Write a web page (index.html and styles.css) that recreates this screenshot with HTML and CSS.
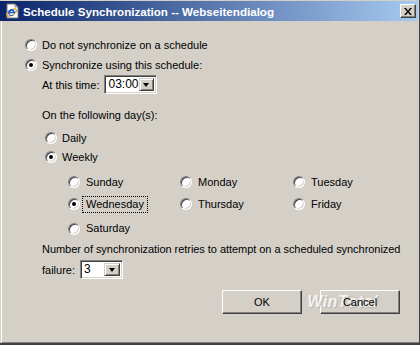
FILE: index.html
```html
<!DOCTYPE html>
<html lang="de">
<head>
  <meta charset="UTF-8" />
  <title>Schedule Synchronization -- Webseitendialog</title>
  <link rel="stylesheet" href="styles.css">
</head>
<body>
  <div class="window">
    <div class="titlebar">
      <svg class="app-icon" width="16" height="16" viewBox="0 0 16 16">
        <path d="M3 1h8l3 3v11H3z" fill="#fff" stroke="#7a7a7a" stroke-width="1"/>
        <path d="M11 1v3h3" fill="none" stroke="#7a7a7a" stroke-width="1"/>
        <ellipse cx="7.5" cy="9.5" rx="5.5" ry="2.5" fill="none" stroke="#e0a020" stroke-width="1.2" transform="rotate(-30 7.5 9.5)"/>
        <path d="M11 9.5a3.5 3.5 0 1 0-1 2.5h-1.6a2 2 0 1 1 .9-2.9H5.6v1.2H11z" fill="#1a5fd0"/>
      </svg>
      <span class="title">Schedule Synchronization -- Webseitendialog</span>
      <span class="close-btn">
        <svg width="8" height="7" viewBox="0 0 8 7"><path d="M0 0h2l2 2.5L6 0h2L5 3.5 8 7H6L4 4.5 2 7H0l3-3.5z" fill="#000"/></svg>
      </span>
    </div>

    <div class="dialog">
      <div class="row">
        <span class="radio"></span>
        <span class="label">Do not synchronize on a schedule</span>
      </div>
      <div class="row">
        <span class="radio checked"></span>
        <span class="label">Synchronize using this schedule:</span>
      </div>

      <div class="section">
        <div class="row time-row">
          <span class="label">At this time:</span>
          <span class="select time-select">
            <span class="select-value">03:00</span>
            <span class="select-btn"><span class="arrow"></span></span>
          </span>
        </div>

        <div class="row days-title">
          <span class="label">On the following day(s):</span>
        </div>

        <div class="freq">
          <div class="row small">
            <span class="radio"></span>
            <span class="label">Daily</span>
          </div>
          <div class="row small">
            <span class="radio checked"></span>
            <span class="label">Weekly</span>
          </div>
        </div>

        <div class="days">
          <div class="day"><span class="radio"></span><span class="day-label">Sunday</span></div>
          <div class="day"><span class="radio"></span><span class="day-label">Monday</span></div>
          <div class="day"><span class="radio"></span><span class="day-label">Tuesday</span></div>
          <div class="day"><span class="radio checked"></span><span class="day-label focused">Wednesday</span></div>
          <div class="day"><span class="radio"></span><span class="day-label">Thursday</span></div>
          <div class="day"><span class="radio"></span><span class="day-label">Friday</span></div>
          <div class="day last"><span class="radio"></span><span class="day-label">Saturday</span></div>
        </div>

        <div class="row retries">
          <span class="label">Number of synchronization retries to attempt on a scheduled synchronized</span>
        </div>
        <div class="row failure-row">
          <span class="label">failure:</span>
          <span class="select retry-select">
            <span class="select-value">3</span>
            <span class="select-btn"><span class="arrow"></span></span>
          </span>
        </div>
      </div>

      <div class="buttons">
        <span class="watermark">WinTotal</span>
        <span class="button"><span class="btn-text">OK</span></span>
        <span class="button"><span class="btn-text">Cancel</span></span>
      </div>
    </div>
  </div>
</body>
</html>
```

FILE: styles.css
```css
body {
  margin: 0;
  padding: 0;
  font-family: "Liberation Sans", Arial, sans-serif;
  font-size: 11px;
  color: #000;
  background: #d4d0c8;
}
.window {
  width: 420px;
  height: 345px;
  box-sizing: border-box;
  padding-top: 1px;
  background: #d4d0c8;
  border-right: 1px solid #404040;
  border-bottom: 2px solid #404040;
  display: flex;
  flex-direction: column;
}
.titlebar {
  height: 20px;
  margin-right: 1px;
  display: flex;
  align-items: center;
  background: linear-gradient(to right, #0a246a, #a6caf0);
  color: #fff;
}
.app-icon {
  margin-left: 4px;
  flex: none;
}
.title {
  margin-left: 3px;
  font-weight: bold;
  font-size: 11.6px;
  white-space: nowrap;
}
.close-btn {
  margin-left: auto;
  margin-right: 2px;
  width: 16px;
  height: 14px;
  box-sizing: border-box;
  background: #d4d0c8;
  border: 1px solid;
  border-color: #fff #404040 #404040 #fff;
  box-shadow: inset -1px -1px #808080;
  display: flex;
  align-items: center;
  justify-content: center;
}
.dialog {
  flex: 1;
  margin-left: 1px;
  border-left: 1px solid #fff;
  border-bottom: 1px solid #808080;
  padding: 14px 0 0 23px;
  position: relative;
}
.row {
  height: 20px;
  display: flex;
  align-items: center;
  white-space: nowrap;
}
.row .radio + .label {
  margin-left: 5px;
}
.radio {
  width: 12px;
  height: 12px;
  box-sizing: border-box;
  border-radius: 50%;
  border: 1px solid;
  border-color: #808080 #fff #fff #808080;
  box-shadow: inset 1px 1px #404040, inset -1px -1px #d4d0c8;
  background: #fff;
  flex: none;
  position: relative;
}
.radio.checked::after {
  content: "";
  position: absolute;
  left: 3px;
  top: 3px;
  width: 4px;
  height: 4px;
  border-radius: 50%;
  background: #000;
}
.section {
  margin-left: 17px;
}
.time-row {
  height: 19px;
}
.time-row .label {
  margin-right: 5px;
}
.select {
  display: flex;
  box-sizing: border-box;
  height: 19px;
  border: 1px solid;
  border-color: #808080 #fff #fff #808080;
  box-shadow: inset 1px 1px #404040, inset -1px -1px #d4d0c8;
  background: #fff;
  padding: 2px;
}
.time-select {
  width: 53px;
}
.retry-select {
  width: 43px;
  margin-left: 5px;
}
.select-value {
  flex: 1;
  font-size: 12px;
  line-height: 13px;
  padding-left: 1px;
}
.select-btn {
  width: 16px;
  box-sizing: border-box;
  background: #d4d0c8;
  border: 1px solid;
  border-color: #d4d0c8 #404040 #404040 #d4d0c8;
  box-shadow: inset 1px 1px #fff, inset -1px -1px #808080;
  display: flex;
  align-items: center;
  justify-content: center;
}
.arrow {
  width: 0;
  height: 0;
  border-left: 3.5px solid transparent;
  border-right: 3.5px solid transparent;
  border-top: 4px solid #000;
  margin-top: 1px;
}
.days-title {
  margin-top: 11px;
}
.freq {
  margin-top: 3px;
  margin-left: 3px;
}
.row.small {
  height: 19px;
}
.days {
  margin-top: 6px;
  margin-left: 26px;
  display: grid;
  grid-template-columns: 112px 113px 1fr;
  grid-template-rows: 20px 20px 20px;
  row-gap: 2px;
}
.day {
  display: flex;
  align-items: center;
}
.day.last {
  margin-top: 5px;
}
.day-label {
  margin-left: 2px;
  padding: 1px 3px 2px;
  border: 1px solid transparent;
}
.day-label.focused {
  border: 1px dotted #000;
}
.retries {
  margin-top: 3px;
  letter-spacing: -0.05px;
}
.failure-row {
  margin-top: 1px;
  height: 19px;
}
.buttons {
  display: flex;
  justify-content: flex-end;
  gap: 18px;
  margin: 11px 19px 0 0;
  position: relative;
}
.button {
  width: 80px;
  height: 24px;
  box-sizing: border-box;
  border: 1px solid;
  border-color: #fff #404040 #404040 #fff;
  box-shadow: inset -1px -1px #808080;
  display: flex;
  align-items: center;
  justify-content: center;
}
.btn-text {
  position: relative;
  z-index: 1;
}
.watermark {
  position: absolute;
  right: 22px;
  top: 3px;
  z-index: 0;
  font-size: 16px;
  font-weight: bold;
  font-style: italic;
  color: #fff;
  text-shadow: 1px 1px #b0aca4;
  letter-spacing: 0.5px;
  opacity: 0.75;
}
```
